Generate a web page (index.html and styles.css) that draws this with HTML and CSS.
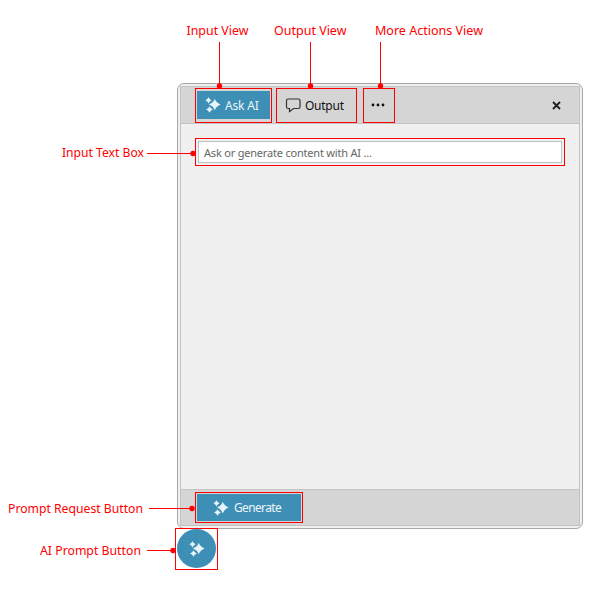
FILE: index.html
```
<!DOCTYPE html>
<html lang="en">
<head>
<meta charset="utf-8">
<title>AI Prompt</title>
<link rel="stylesheet" href="styles.css">
</head>
<body>
<svg class="defs" aria-hidden="true">
  <symbol id="sparkle" viewBox="0 0 16 16">
    <path d="M9.800 1.800Q11.300 6 15.700 7.500Q11.300 9 9.800 13.200Q8.300 9 3.900 7.500Q8.300 6 9.800 1.800ZM3.500 .2Q4.400 2.400 6.600 3.300Q4.400 4.200 3.500 6.400Q2.600 4.200 .4 3.300Q2.600 2.400 3.500 .2ZM4.500 9.200Q5.400 11.600 7.900 12.500Q5.400 13.400 4.500 15.800Q3.600 13.400 1.100 12.500Q3.600 11.600 4.500 9.200Z"/>
  </symbol>
</svg>
<main class="figure">
  <section class="panel">
    <div class="frame">
      <header class="toolbar">
        <button class="btn primary ask"><svg class="spark"><use href="#sparkle"/></svg><span>Ask AI</span></button>
        <button class="btn output"><svg class="bubble" viewBox="0 0 16 16"><path d="M3 2H13.500Q15 2 15 3.500V10Q15 11.500 13.500 11.500H8.500L4.500 14.500V11.500H3Q1.500 11.500 1.500 10V3.500Q1.500 2 3 2Z"/></svg><span>Output</span></button>
        <button class="btn more" aria-label="More actions"><svg viewBox="0 0 14 4"><circle cx="2" cy="2" r="1.400"/><circle cx="7" cy="2" r="1.400"/><circle cx="12" cy="2" r="1.400"/></svg></button>
        <button class="btn close" aria-label="Close"><svg viewBox="0 0 9 9"><path d="M1 1L8 8M8 1L1 8"/></svg></button>
      </header>
      <div class="content"><input class="prompt" placeholder="Ask or generate content with AI ..."></div>
      <footer class="actions">
        <button class="btn primary generate"><svg class="spark"><use href="#sparkle"/></svg><span>Generate</span></button>
      </footer>
    </div>
  </section>
  <button class="fab" aria-label="AI Prompt"><svg class="spark"><use href="#sparkle"/></svg></button>
  <svg class="callouts" viewBox="0 0 616 590">
    <g class="marks">
      <rect x="195.500" y="88.500" width="76" height="34"/>
      <rect x="276.500" y="88.500" width="80" height="34"/>
      <rect x="363.500" y="88.500" width="31" height="34"/>
      <rect x="195.500" y="138.500" width="369" height="27"/>
      <rect x="195.500" y="492.500" width="107" height="30"/>
      <rect x="175.500" y="528.500" width="42" height="41"/>
      <path d="M219.500 42V86M310.500 42V86M380.500 42V86M147 153.500H193M149 508.500H192M147 550.500H173"/>
    </g>
    <g class="dots">
      <circle cx="219.500" cy="86" r="2.700"/><circle cx="310.500" cy="86" r="2.700"/><circle cx="380.500" cy="86" r="2.700"/>
      <circle cx="193" cy="153.500" r="2.700"/><circle cx="192" cy="508.500" r="2.700"/><circle cx="173" cy="550.500" r="2.700"/>
    </g>
    <g class="labels">
      <text x="186.500" y="35" textLength="62" lengthAdjust="spacingAndGlyphs">Input View</text>
      <text x="274" y="35" textLength="72.500" lengthAdjust="spacingAndGlyphs">Output View</text>
      <text x="375" y="35" textLength="108" lengthAdjust="spacingAndGlyphs">More Actions View</text>
      <text x="62" y="157.400" textLength="82" lengthAdjust="spacingAndGlyphs">Input Text Box</text>
      <text x="8" y="513" textLength="135" lengthAdjust="spacingAndGlyphs">Prompt Request Button</text>
      <text x="40" y="555" textLength="101" lengthAdjust="spacingAndGlyphs">AI Prompt Button</text>
    </g>
  </svg>
</main>
</body>
</html>
```
FILE: styles.css
```
* { box-sizing: border-box; }
body { margin: 0; background: #fff; font-family: "Noto Sans", "Open Sans", sans-serif; font-size: 12px; }
.defs { display: block; width: 0; height: 0; }
.figure { position: relative; width: 616px; height: 590px; padding: 83px 0 0 177px; overflow: hidden; }
.panel { width: 406px; height: 446px; padding: 2px; border: 1px solid #a6a6a6; border-radius: 7px; background: #f0f0f0; }
.frame { display: flex; flex-direction: column; height: 440px; border: 1px solid #c3c3c3; }
.toolbar { display: flex; align-items: center; height: 37px; padding: 0 16px; background: #d5d5d5; border-bottom: 1px solid #c3c3c3; }
.btn { display: flex; align-items: center; padding: 0; border: 0; background: none; font: inherit; color: #111; white-space: nowrap; }
.primary { background: #3d8fb5; color: #eef6fa; }
.spark { flex: none; width: 16px; height: 16px; fill: #e8f4fa; }
.ask { width: 73px; height: 28px; padding-left: 8px; gap: 4px; letter-spacing: -.15px; }
.output { width: 77px; height: 28px; margin-left: 9px; padding-left: 6px; gap: 4px; letter-spacing: -.25px; }
.bubble { width: 16px; height: 16px; fill: none; stroke: #333; stroke-width: 1.2; }
.more { width: 30px; height: 28px; margin-left: 7px; justify-content: center; }
.more svg { width: 14px; height: 4px; fill: #111; }
.close { margin: 0 -1px 0 auto; width: 12px; height: 28px; }
.close svg { width: 9px; height: 9px; fill: none; stroke: #222; stroke-width: 1.9; }
.content { flex: 1; padding: 17px; }
.prompt { display: block; width: 364px; height: 22px; padding: 1px 5px 0; border: 1px solid #c3c3c3; background: #fff; font: 11px "Noto Sans", sans-serif; letter-spacing: -.2px; }
.prompt::placeholder { color: #666; opacity: 1; }
.actions { display: flex; align-items: center; height: 36px; padding: 0 16px; background: #d5d5d5; border-top: 1px solid #c3c3c3; }
.generate { width: 104px; height: 27px; padding-left: 16px; gap: 5px; letter-spacing: -.65px; }
.fab { display: flex; align-items: center; justify-content: center; width: 39px; height: 39px; padding: 0; border: 0; border-radius: 50%; background: #3d8fb5; }
.callouts { position: absolute; inset: 0; width: 616px; height: 590px; pointer-events: none; }
.marks { fill: none; stroke: #f00; stroke-width: 1; }
.dots { fill: #f00; }
.labels { fill: #f00; font: 13px "Noto Sans", "Open Sans", sans-serif; }
```
